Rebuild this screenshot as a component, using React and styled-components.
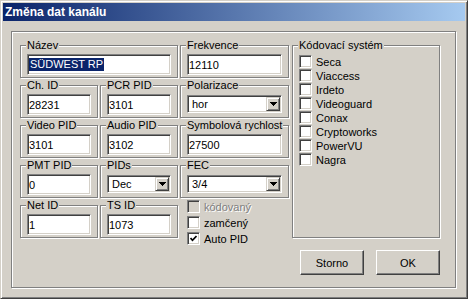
import React from "react";
import styled, { createGlobalStyle } from "styled-components";

const GlobalStyle = createGlobalStyle`
  html, body {
    margin: 0;
    padding: 0;
    background: #d4d0c8;
  }
  body {
    font-family: "Liberation Sans", Arial, sans-serif;
    font-size: 11px;
    color: #000;
  }
`;

const codings = [
  "Seca",
  "Viaccess",
  "Irdeto",
  "Videoguard",
  "Conax",
  "Cryptoworks",
  "PowerVU",
  "Nagra",
];

function App() {
  return (
    <>
      <GlobalStyle />
      <Window>
        <TitleBar>Změna dat kanálu</TitleBar>
        <Body>
          <Frame>
            <FieldGrid>
              <Group $span={2}>
                <Legend>Název</Legend>
                <Edit>
                  <Selected>SÜDWEST RP</Selected>
                </Edit>
              </Group>
              <Group>
                <Legend>Frekvence</Legend>
                <Edit>12110</Edit>
              </Group>

              <Group>
                <Legend>Ch. ID</Legend>
                <Edit>28231</Edit>
              </Group>
              <Group>
                <Legend>PCR PID</Legend>
                <Edit>3101</Edit>
              </Group>
              <Group>
                <Legend>Polarizace</Legend>
                <Combo value="hor" />
              </Group>

              <Group>
                <Legend>Video PID</Legend>
                <Edit>3101</Edit>
              </Group>
              <Group>
                <Legend>Audio PID</Legend>
                <Edit>3102</Edit>
              </Group>
              <Group>
                <Legend>Symbolová rychlost</Legend>
                <Edit>27500</Edit>
              </Group>

              <Group>
                <Legend>PMT PID</Legend>
                <Edit>0</Edit>
              </Group>
              <Group>
                <Legend>PIDs</Legend>
                <Combo value="Dec" />
              </Group>
              <Group>
                <Legend>FEC</Legend>
                <Combo value="3/4" />
              </Group>

              <Group>
                <Legend>Net ID</Legend>
                <Edit>1</Edit>
              </Group>
              <Group>
                <Legend>TS ID</Legend>
                <Edit>1073</Edit>
              </Group>
              <FlagList>
                <Check label="kódovaný" disabled />
                <Check label="zamčený" />
                <Check label="Auto PID" checked />
              </FlagList>
            </FieldGrid>

            <RightColumn>
              <CodingGroup>
                <Legend>Kódovací systém</Legend>
                <CodingList>
                  {codings.map((name) => (
                    <Check key={name} label={name} />
                  ))}
                </CodingList>
              </CodingGroup>
              <ButtonRow>
                <Button>Storno</Button>
                <Button>OK</Button>
              </ButtonRow>
            </RightColumn>
          </Frame>
        </Body>
      </Window>
    </>
  );
}

function Combo({ value }) {
  return (
    <ComboBox>
      <ComboText>{value}</ComboText>
      <DropButton>
        <svg width="7" height="4" viewBox="0 0 7 4" shapeRendering="crispEdges">
          <rect x="0" y="0" width="7" height="1" fill="#000" />
          <rect x="1" y="1" width="5" height="1" fill="#000" />
          <rect x="2" y="2" width="3" height="1" fill="#000" />
          <rect x="3" y="3" width="1" height="1" fill="#000" />
        </svg>
      </DropButton>
    </ComboBox>
  );
}

function Check({ label, checked, disabled }) {
  return (
    <CheckRow>
      <CheckBox $disabled={disabled}>
        {checked && (
          <svg width="7" height="7" viewBox="0 0 7 7">
            <polyline
              points="0.5,3 2.5,5.3 6.5,1"
              fill="none"
              stroke="#000"
              strokeWidth="1.7"
            />
          </svg>
        )}
      </CheckBox>
      <CheckLabel $disabled={disabled}>{label}</CheckLabel>
    </CheckRow>
  );
}

const Window = styled.div`
  width: 468px;
  height: 299px;
  box-sizing: border-box;
  background: #d4d0c8;
  border: 1px solid;
  border-color: #d4d0c8 #404040 #404040 #d4d0c8;
  box-shadow: inset 1px 1px #fff, inset -1px -1px #808080;
  padding: 2px;
  display: flex;
  flex-direction: column;
`;

const TitleBar = styled.div`
  height: 18px;
  flex: none;
  display: flex;
  align-items: center;
  padding-left: 2px;
  background: linear-gradient(to right, #0a246a, #a6caf0);
  color: #fff;
  font-weight: bold;
  font-size: 12px;
`;

const Body = styled.div`
  flex: 1;
  display: flex;
  padding: 10px 9px 8px 8px;
`;

const Frame = styled.div`
  flex: 1;
  display: flex;
  align-items: flex-start;
  gap: 3px;
  padding: 7px 8px 0 8px;
  border: 1px solid #808080;
  box-shadow: inset 1px 1px #fff, 1px 1px #fff;
`;

const FieldGrid = styled.div`
  display: grid;
  grid-template-columns: 78px 78px 109px;
  grid-template-rows: repeat(5, 39px);
  column-gap: 2px;
  row-gap: 1px;
`;

const Group = styled.fieldset`
  grid-column: span ${(p) => p.$span || 1};
  margin: 0;
  min-width: 0;
  padding: 2px 6px 0;
  border: 1px solid #808080;
  box-shadow: inset 1px 1px #fff, 1px 1px #fff;
`;

const Legend = styled.legend`
  margin-left: -1px;
  padding: 0 1px;
  line-height: 13px;
  white-space: nowrap;
  background: #d4d0c8;
`;

const Sunken = styled.div`
  box-sizing: border-box;
  background: #fff;
  border: 1px solid;
  border-color: #808080 #fff #fff #808080;
  box-shadow: inset 1px 1px #404040, inset -1px -1px #d4d0c8;
`;

const Edit = styled(Sunken)`
  height: 21px;
  display: flex;
  align-items: center;
  padding: 0 2px 0 1px;
  white-space: nowrap;
`;

const Selected = styled.span`
  background: #0a246a;
  color: #fff;
  line-height: 13px;
  padding: 0 1px;
`;

const ComboBox = styled(Sunken)`
  height: 18px;
  margin-top: 1px;
  display: flex;
  align-items: stretch;
  padding: 1px;
`;

const ComboText = styled.span`
  flex: 1;
  display: flex;
  align-items: center;
  padding-left: 3px;
`;

const DropButton = styled.div`
  width: 14px;
  box-sizing: border-box;
  display: flex;
  align-items: center;
  justify-content: center;
  background: #d4d0c8;
  border: 1px solid;
  border-color: #d4d0c8 #404040 #404040 #d4d0c8;
  box-shadow: inset 1px 1px #fff, inset -1px -1px #808080;
`;

const FlagList = styled.div`
  display: flex;
  flex-direction: column;
  gap: 3px;
  padding: 1px 0 0 7px;
`;

const CheckRow = styled.div`
  display: flex;
  align-items: center;
  gap: 4px;
  height: 13px;
  white-space: nowrap;
`;

const CheckBox = styled(Sunken)`
  width: 13px;
  height: 13px;
  flex: none;
  display: flex;
  align-items: center;
  justify-content: center;
  background: ${(p) => (p.$disabled ? "#d4d0c8" : "#fff")};
`;

const CheckLabel = styled.span`
  color: ${(p) => (p.$disabled ? "#808080" : "#000")};
  text-shadow: ${(p) => (p.$disabled ? "1px 1px #fff" : "none")};
`;

const RightColumn = styled.div`
  width: 148px;
  display: flex;
  flex-direction: column;
`;

const CodingGroup = styled(Group)`
  height: 199px;
  box-sizing: border-box;
`;

const CodingList = styled.div`
  display: flex;
  flex-direction: column;
  gap: 1px;
  padding-top: 1px;
`;

const ButtonRow = styled.div`
  display: flex;
  justify-content: flex-end;
  gap: 12px;
  margin-top: 12px;
`;

const Button = styled.button`
  width: 64px;
  height: 25px;
  padding: 0;
  font-family: inherit;
  font-size: 11px;
  color: #000;
  background: #d4d0c8;
  border: 1px solid;
  border-color: #fff #404040 #404040 #fff;
  box-shadow: inset -1px -1px #808080;
`;

export default App;
